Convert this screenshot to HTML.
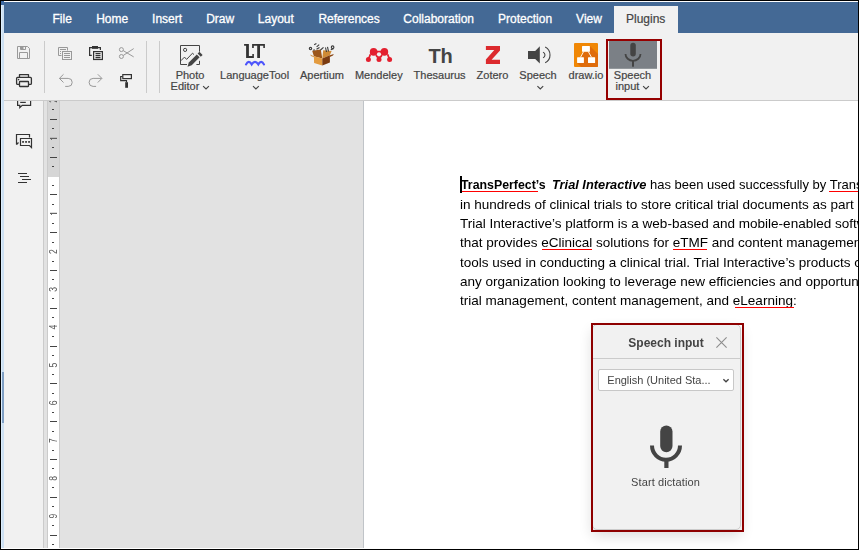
<!DOCTYPE html>
<html><head><meta charset="utf-8">
<style>
*{margin:0;padding:0;box-sizing:border-box}
html,body{width:859px;height:550px;overflow:hidden;background:#000;font-family:"Liberation Sans",sans-serif}
.a{position:absolute}
#hdr{left:4px;top:2px;width:854px;height:31px;background:#446995}
.tab{position:absolute;top:2px;height:31px;color:#fff;font-size:12px;line-height:31px;white-space:nowrap;-webkit-text-stroke:0.3px #fff}
#tb{left:4px;top:33px;width:854px;height:67px;background:#f1f1f1}
#tbb{left:4px;top:100px;width:854px;height:1px;background:#cbcbcb}
#side{left:4px;top:101px;width:39px;height:447px;background:#f1f1f1}
#sideb{left:43px;top:101px;width:1px;height:447px;background:#cbcbcb}
#doc{left:44px;top:101px;width:814px;height:447px;background:#e2e2e2}
.lbl{position:absolute;font-size:11px;line-height:11px;color:#444;text-align:center;white-space:nowrap;-webkit-text-stroke:0.2px #444}
.ch{display:inline-block;width:7px;height:4px}
.ln{position:absolute;left:459.6px;font-size:13px;line-height:19.2px;height:19.2px;color:#000;white-space:nowrap;transform-origin:0 0;transform:scaleX(1.04)}
.ul{position:absolute;height:1px;background:#f00}
.sep{position:absolute;top:41px;width:1px;height:52px;background:#cbcbcb}
</style></head><body>
<!-- frame -->
<div class="a" style="left:4px;top:1px;width:854px;height:1px;background:#fff"></div>
<div class="a" style="left:1px;top:1px;width:3px;height:4px;background:#3d6aa3"></div>
<div class="a" style="left:1px;top:5px;width:1px;height:543px;background:#ddeefc"></div>
<div class="a" style="left:2px;top:5px;width:2px;height:543px;background:#cde0f2"></div>
<div class="a" style="left:2px;top:372px;width:2px;height:51px;background:#7f9fc4"></div>
<div class="a" style="left:1px;top:548px;width:857px;height:1px;background:#fff"></div>

<div id="hdr" class="a">
<div class="tab" style="left:48.5px">File</div>
<div class="tab" style="left:92.2px">Home</div>
<div class="tab" style="left:148.1px">Insert</div>
<div class="tab" style="left:202.2px">Draw</div>
<div class="tab" style="left:253.8px">Layout</div>
<div class="tab" style="left:314.4px">References</div>
<div class="tab" style="left:399.3px">Collaboration</div>
<div class="tab" style="left:494.1px">Protection</div>
<div class="tab" style="left:572.1px">View</div>
<div class="a" style="left:610px;top:4px;width:64px;height:27px;background:#f1f1f1"></div>
<div class="tab" style="left:622.0px;color:#444;-webkit-text-stroke:0.2px #444">Plugins</div>
</div>
<div id="tb" class="a"></div>
<svg class="a" style="left:0;top:0" width="859" height="110" viewBox="0 0 859 110">
<g fill="none" stroke="#999" stroke-width="1">
<path d="M17.5,46.5H27.5L29.5,48.5V58.5H17.5Z"/>
<path d="M20.5,46.5V49.5H25.5V46.5"/><rect x="20.5" y="47" width="3" height="2" fill="#999" stroke="none"/>
<path d="M19.5,58.5V52.5H27.5V58.5"/>
</g>
<g fill="none" stroke="#333" stroke-width="1.3" stroke-linejoin="round">
<path d="M19.5,77.3V74.6H28.5V77.3"/>
<rect x="16.6" y="77.4" width="14.8" height="7" rx="1"/>
<rect x="19.5" y="81.5" width="9" height="5" rx="0.5" fill="#f1f1f1"/>
</g>
<circle cx="18.6" cy="79.6" r="0.8" fill="#333"/>

<!-- separators -->
<rect x="44" y="41" width="1" height="52" fill="#cbcbcb"/>
<rect x="146" y="41" width="1" height="52" fill="#cbcbcb"/>
<rect x="159" y="41" width="1" height="52" fill="#cbcbcb"/>
<!-- copy (disabled) -->
<g fill="none" stroke="#999" stroke-width="1">
<path d="M61.5,55.5H58.5V47.5H67.5V50.5"/>
<rect x="62.5" y="51.5" width="9" height="8"/>
<path d="M60,49.5H66M64,53.5H70M64,55.5H70M64,57.5H70"/>
</g>
<rect x="60" y="51" width="1" height="1" fill="#999"/><rect x="60" y="53" width="1" height="1" fill="#999"/>
<!-- paste -->
<g fill="none" stroke="#333" stroke-width="1.2">
<path d="M91.8,55.4H89.6V47.6H100.4V50"/>
<rect x="93.6" y="51.6" width="8.8" height="7.9"/>
<path d="M95.5,53.6H100.5M95.5,55.6H100.5M95.5,57.6H100.5"/>
</g>
<rect x="92" y="46" width="6" height="2.8" fill="#333"/>
<!-- scissors -->
<g fill="none" stroke="#999" stroke-width="1">
<circle cx="121.4" cy="49.6" r="2"/>
<circle cx="121.4" cy="56.5" r="2"/>
<path d="M123.2,50.6L133.7,56.9M123.2,55.5L133.7,48.6"/>
</g>
<!-- undo -->
<g fill="none" stroke="#999" stroke-width="1">
<path d="M63.5,74.3L59.4,78.4L63.5,82.5M59.6,78.4H68.2A4,4 0 0 1 68.2,86.4H65.2"/>
</g>
<!-- redo -->
<g fill="none" stroke="#999" stroke-width="1">
<path d="M97.8,74.3L101.9,78.4L97.8,82.5M101.7,78.4H93.1A4,4 0 0 0 93.1,86.4H96.1"/>
</g>
<!-- format painter -->
<g fill="none" stroke="#333" stroke-width="1.2">
<rect x="122.8" y="74.6" width="8.6" height="4"/>
<path d="M122.6,76.5H120.7V80.6H126.5V82.3"/>
</g>
<rect x="125.2" y="82.2" width="2.8" height="5.6" fill="#333"/>
<!-- photo editor -->
<g fill="none" stroke="#444" stroke-width="1">
<path d="M187,64.5H180.5V45.5H199.5V51.7M199.5,60.8V64.5H196.4"/>
<circle cx="185.1" cy="49.9" r="1.6"/>
<path d="M180.8,60.8L184.5,57.1L186.6,59.4L192.5,53.2L194,54.6"/>
</g>
<path d="M187.5,66.8L188.8,62.4L196.8,54.4L199.6,57.2L191.7,65.2Z" fill="#444"/>
<path d="M197.6,53.6L199.4,51.8L202.6,55L200.8,56.8Z" fill="#444"/>

<!-- LT -->
<g fill="#333">
<path d="M244.1,44.1H248.9V56.1H252.3V54.1H253.9V57.9H246.1V45.8H244.1Z"/>
<path d="M252.1,44.1H264.9V47.9H263.3V45.8H260V57.9H257.2V45.8H253.8V47.9H252.1Z"/>
</g>
<path d="M246,64.4Q248.8,59.4 251.7,64.4Q255,59.4 258.3,64.4Q261.2,59.4 264,64.4" fill="none" stroke="#4d55fb" stroke-width="2.1" stroke-linecap="round"/>

<!-- apertium -->
<path d="M312.2,50.8L320.8,49.6L322.3,58.6L313.9,56.3Z" fill="#9c561a"/>
<path d="M323.2,50.2L331.6,51L329.9,55.3L322.3,58.6Z" fill="#cf8b35"/>
<path d="M310.2,54.6L313.9,56.3L314.6,57.6L311,56Z" fill="#d49240"/>
<path d="M329.9,55.3L333.8,54L333,55.6L329.9,57Z" fill="#8a4614"/>
<path d="M313.9,56.3L322.3,58.6V65.6L314.1,62.9Z" fill="#e39b3f"/>
<path d="M322.3,58.6L329.9,55.3V62.6L322.3,65.6Z" fill="#7b3b10"/>
<g fill="none" stroke="#3a3a3a" stroke-width="1.1">
<circle cx="310.5" cy="48.6" r="1.2"/>
<path d="M314.2,44.8L316.4,43.6M316.6,46.8L319.2,44.6M316.5,49.3L319.5,47.5M320.5,50L323.5,47.3M313.5,50.5L314.5,49.5"/>
<path d="M325.5,47.5L326.5,52M327.5,46.8L328.5,51.5"/>
<circle cx="332.6" cy="47.2" r="1.3"/>
<path d="M330.8,49.8L333.5,48.8"/>
</g>

<!-- mendeley -->
<g fill="#e3202f">
<circle cx="368.4" cy="59.4" r="2.5"/><circle cx="379" cy="59.4" r="2.5"/><circle cx="389.6" cy="59.4" r="2.5"/>
<circle cx="373.6" cy="51.9" r="3.8"/><circle cx="384.4" cy="51.9" r="3.8"/><circle cx="379" cy="54.4" r="3.6"/><path d="M376,50.3Q379,51.8 382,50.3V54H376Z"/>
</g>
<path d="M370.4,54.2L368.6,59M387.6,54.2L389.4,59M379,57L379,59" stroke="#e3202f" stroke-width="1.8"/>
<circle cx="379" cy="54.3" r="2.1" fill="#f1f1f1"/>
<!-- Th -->
<text x="440.6" y="62.5" text-anchor="middle" font-family="Liberation Sans" font-weight="bold" font-size="20" fill="#444">Th</text>
<!-- Zotero Z -->
<path d="M485.9,46H500V50.4L491.6,59.8H500V63.9H485.9V59.6L494.3,50H485.9Z" fill="#dc2a2e"/>
<!-- speaker -->
<path d="M528,50.9H535.2L539.8,46.2V63.6L535.2,58.9H528Z" fill="#444"/>
<g fill="none" stroke="#444" stroke-width="1.1">
<path d="M543,52.3A2.9,2.9 0 0 1 543,57.8"/>
<path d="M545.2,47A8.9,8.9 0 0 1 545.2,62.8"/>
</g>
<!-- draw.io -->
<rect x="574" y="43" width="24" height="24" rx="1" fill="#f08705"/>
<path d="M589.9,46L598,54.1V66A1,1 0 0 1 597,67H581.1L577.1,62.9H595.1V57.2H589.9Z" fill="#df6c0c"/><path d="M583.6,51.7H589.9V57.3H580.5Z" fill="#df6c0c"/><rect x="583.5" y="57" width="5" height="6" fill="#df6c0c"/>
<g fill="#fff">
<rect x="582" y="46" width="7.9" height="5.7" rx="0.5"/>
<rect x="577.1" y="57.2" width="6.8" height="5.7" rx="0.5"/>
<rect x="588" y="57.2" width="7.1" height="5.7" rx="0.5"/>
</g>
<path d="M583.6,51.6L580.5,57.3M588.3,51.6L591.5,57.3" stroke="#fff" stroke-width="0.9"/>
<!-- speech input highlighted -->
<rect x="609" y="41" width="48" height="27.8" fill="#7b8086"/>
<rect x="630.3" y="42.8" width="5.5" height="13.6" rx="2.75" fill="#444"/>
<path d="M625.5,53.9A7.5,6.9 0 0 0 640.5,53.9" fill="none" stroke="#444" stroke-width="1.8"/>
<rect x="632" y="60.2" width="2" height="6.5" fill="#444"/>
<rect x="607" y="40" width="54" height="59" fill="none" stroke="#960000" stroke-width="2"/>
<g fill="none" stroke="#444" stroke-width="1.15"><path d="M203.10,86.2L206.00,89L208.90,86.2"/><path d="M253.00,86.2L255.90,89L258.80,86.2"/><path d="M537.40,86.2L540.30,89L543.20,86.2"/><path d="M643.10,86.2L646.00,89L648.90,86.2"/></g>
</svg>
<div class="lbl" style="left:140.0px;top:70px;width:100px">Photo<br>Editor <span class="ch"></span></div>
<div class="lbl" style="left:204.6px;top:70px;width:100px">LanguageTool<br><span class="ch"></span></div>
<div class="lbl" style="left:272.0px;top:70px;width:100px">Apertium</div>
<div class="lbl" style="left:328.8px;top:70px;width:100px">Mendeley</div>
<div class="lbl" style="left:389.6px;top:70px;width:100px">Thesaurus</div>
<div class="lbl" style="left:442.5px;top:70px;width:100px">Zotero</div>
<div class="lbl" style="left:488.0px;top:70px;width:100px">Speech<br><span class="ch"></span></div>
<div class="lbl" style="left:536.0px;top:70px;width:100px">draw.io</div>
<div class="lbl" style="left:582.5px;top:70px;width:100px">Speech<br>input <span class="ch"></span></div>

<div id="tbb" class="a"></div>
<div id="side" class="a"></div>
<div id="sideb" class="a"></div>

<svg class="a" style="left:0;top:0" width="60" height="550">
<g fill="none" stroke="#333" stroke-width="1.2" stroke-linejoin="miter">
<path d="M17.6,101V105.4H19.8V107.7L22.2,105.4H30.6V101"/>
<path d="M20.2,102.4H25.8"/>
<path d="M16.5,144.5V134.5H29.5V137.5"/>
<path d="M16.5,144.5L18.5,142.5"/>
<path d="M20.5,138.5H31.5V147.5L29.5,145.5H20.5Z"/>
</g>
<g fill="#333">
<rect x="22.2" y="141" width="1.7" height="1.8"/><rect x="25.2" y="141" width="1.7" height="1.8"/><rect x="28.2" y="141" width="1.7" height="1.8"/>
<rect x="18" y="173" width="9" height="1"/><rect x="20" y="176" width="9" height="1"/><rect x="22" y="179" width="9" height="1"/><rect x="18" y="182" width="9" height="1"/>
</g>
</svg>

<div id="doc" class="a"></div>

<!-- ruler -->
<div class="a" style="left:47px;top:101px;width:13px;height:447px;background:#cbcbcb"></div>
<div class="a" style="left:48px;top:101px;width:11px;height:76px;background:#d6d6d6"></div>
<div class="a" style="left:48px;top:177px;width:11px;height:371px;background:#fff"></div>
<!-- page -->
<div class="a" style="left:363px;top:101px;width:1px;height:447px;background:#c0c4c8"></div>
<div class="a" style="left:364px;top:101px;width:494px;height:447px;background:#fff"></div>
<svg class="a" style="left:0;top:0;will-change:transform;clip-path:inset(101px 0 0 0)" width="859" height="550"><text transform="translate(57.2,100.38) rotate(-90) scale(0.86,1)" text-anchor="middle" font-size="10" fill="#555" font-family="Liberation Sans">2</text><rect x="52" y="109" width="2" height="1" fill="#444"/><rect x="50" y="119" width="7" height="1" fill="#444"/><rect x="52" y="128" width="2" height="1" fill="#444"/><rect x="50" y="137.8" width="7" height="1.1" fill="#555"/><path d="M50.6,138.6L52,139.8" stroke="#555" stroke-width="0.9"/><rect x="52" y="147" width="2" height="1" fill="#444"/><rect x="50" y="157" width="7" height="1" fill="#444"/><rect x="52" y="166" width="2" height="1" fill="#444"/><rect x="52" y="185" width="2" height="1" fill="#444"/><rect x="50" y="194" width="7" height="1" fill="#444"/><rect x="52" y="204" width="2" height="1" fill="#444"/><rect x="50" y="212.8" width="7" height="1.1" fill="#555"/><path d="M50.6,213.6L52,214.8" stroke="#555" stroke-width="0.9"/><rect x="52" y="223" width="2" height="1" fill="#444"/><rect x="50" y="232" width="7" height="1" fill="#444"/><rect x="52" y="242" width="2" height="1" fill="#444"/><text transform="translate(57.2,251.60) rotate(-90) scale(0.86,1)" text-anchor="middle" font-size="10" fill="#555" font-family="Liberation Sans">2</text><rect x="52" y="261" width="2" height="1" fill="#444"/><rect x="50" y="270" width="7" height="1" fill="#444"/><rect x="52" y="279" width="2" height="1" fill="#444"/><text transform="translate(57.2,289.40) rotate(-90) scale(0.86,1)" text-anchor="middle" font-size="10" fill="#555" font-family="Liberation Sans">3</text><rect x="52" y="298" width="2" height="1" fill="#444"/><rect x="50" y="308" width="7" height="1" fill="#444"/><rect x="52" y="317" width="2" height="1" fill="#444"/><text transform="translate(57.2,327.20) rotate(-90) scale(0.86,1)" text-anchor="middle" font-size="10" fill="#555" font-family="Liberation Sans">4</text><rect x="52" y="336" width="2" height="1" fill="#444"/><rect x="50" y="346" width="7" height="1" fill="#444"/><rect x="52" y="355" width="2" height="1" fill="#444"/><text transform="translate(57.2,365.01) rotate(-90) scale(0.86,1)" text-anchor="middle" font-size="10" fill="#555" font-family="Liberation Sans">5</text><rect x="52" y="374" width="2" height="1" fill="#444"/><rect x="50" y="383" width="7" height="1" fill="#444"/><rect x="52" y="393" width="2" height="1" fill="#444"/><text transform="translate(57.2,402.81) rotate(-90) scale(0.86,1)" text-anchor="middle" font-size="10" fill="#555" font-family="Liberation Sans">6</text><rect x="52" y="412" width="2" height="1" fill="#444"/><rect x="50" y="421" width="7" height="1" fill="#444"/><rect x="52" y="431" width="2" height="1" fill="#444"/><text transform="translate(57.2,440.62) rotate(-90) scale(0.86,1)" text-anchor="middle" font-size="10" fill="#555" font-family="Liberation Sans">7</text><rect x="52" y="450" width="2" height="1" fill="#444"/><rect x="50" y="459" width="7" height="1" fill="#444"/><rect x="52" y="468" width="2" height="1" fill="#444"/><text transform="translate(57.2,478.42) rotate(-90) scale(0.86,1)" text-anchor="middle" font-size="10" fill="#555" font-family="Liberation Sans">8</text><rect x="52" y="487" width="2" height="1" fill="#444"/><rect x="50" y="497" width="7" height="1" fill="#444"/><rect x="52" y="506" width="2" height="1" fill="#444"/><text transform="translate(57.2,516.22) rotate(-90) scale(0.86,1)" text-anchor="middle" font-size="10" fill="#555" font-family="Liberation Sans">9</text><rect x="52" y="525" width="2" height="1" fill="#444"/><rect x="50" y="535" width="7" height="1" fill="#444"/><rect x="52" y="544" width="2" height="1" fill="#444"/></svg>



<div class="a" style="left:0;top:0;width:858px;height:550px;will-change:transform;overflow:hidden">
<div class="ln" style="left:460.6px;top:174.8px;transform:scaleX(0.95)"><b>TransPerfect’s</b></div>
<div class="ln" style="left:551.5px;top:174.8px;transform:scaleX(0.985)"><b><i>Trial Interactive</i></b></div>
<div class="ln" style="left:650px;top:174.8px;transform:none">has been used successfully by TransPerfect</div>
<div class="ln" style="top:194.9px">in hundreds of clinical trials to store critical trial documents as part of</div>
<div class="ln" style="top:214.1px">Trial Interactive’s platform is a web-based and mobile-enabled software</div>
<div class="ln" style="top:233.3px">that provides eClinical solutions for eTMF and content management</div>
<div class="ln" style="top:252.5px">tools used in conducting a clinical trial. Trial Interactive’s products can</div>
<div class="ln" style="top:271.7px">any organization looking to leverage new efficiencies and opportunities</div>
<div class="ln" style="top:290.9px">trial management, content management, and eLearning:</div>
<div class="ul" style="left:462px;top:191px;width:76px"></div>
<div class="ul" style="left:829px;top:191px;width:29px"></div>
<div class="ul" style="left:542px;top:249px;width:50px"></div>
<div class="ul" style="left:673px;top:249px;width:34px"></div>
<div class="ul" style="left:735px;top:307px;width:59px"></div>
<div class="a" style="left:460px;top:176px;width:2px;height:17px;background:#000"></div>
</div>

<!-- speech dialog -->
<div class="a" style="left:592px;top:324px;width:149px;height:206px;background:#f1f1f1;border:1px solid #cbcbcb;border-radius:5px;box-shadow:0 6px 14px rgba(0,0,0,0.14)"></div>
<div class="a" style="left:593px;top:358px;width:147px;height:1px;background:#cbcbcb"></div>
<div class="a" style="left:628.3px;top:335px;font-size:12px;line-height:16px;font-weight:bold;color:#444;white-space:nowrap">Speech input</div>
<svg class="a" style="left:0;top:0" width="859" height="550">
<path d="M716.4,337.4L726.6,347.6M726.6,337.4L716.4,347.6" stroke="#8c8c8c" stroke-width="1.1"/>
<rect x="598.5" y="369.5" width="135" height="21" rx="1.5" fill="#fff" stroke="#c8c8c8"/>
<path d="M723.4,379.2L726,381.8L728.6,379.2" fill="none" stroke="#444" stroke-width="1.3"/>
<rect x="660.2" y="425.4" width="12.3" height="26.8" rx="6.15" fill="#444"/>
<path d="M652,445.5A13.8,14 0 0 0 680,445.5" fill="none" stroke="#444" stroke-width="4"/>
<rect x="664.3" y="458" width="4.2" height="10" fill="#444"/>
<rect x="592" y="324" width="151" height="207" fill="none" stroke="#8e0000" stroke-width="2"/>
</svg>
<div class="a" style="left:607.3px;top:373px;font-size:11px;line-height:15px;color:#444;white-space:nowrap">English (United Sta...</div>
<div class="a" style="left:605.5px;top:475px;width:120px;font-size:11px;line-height:15px;letter-spacing:0.1px;color:#444;text-align:center;white-space:nowrap">Start dictation</div>
</body></html>
